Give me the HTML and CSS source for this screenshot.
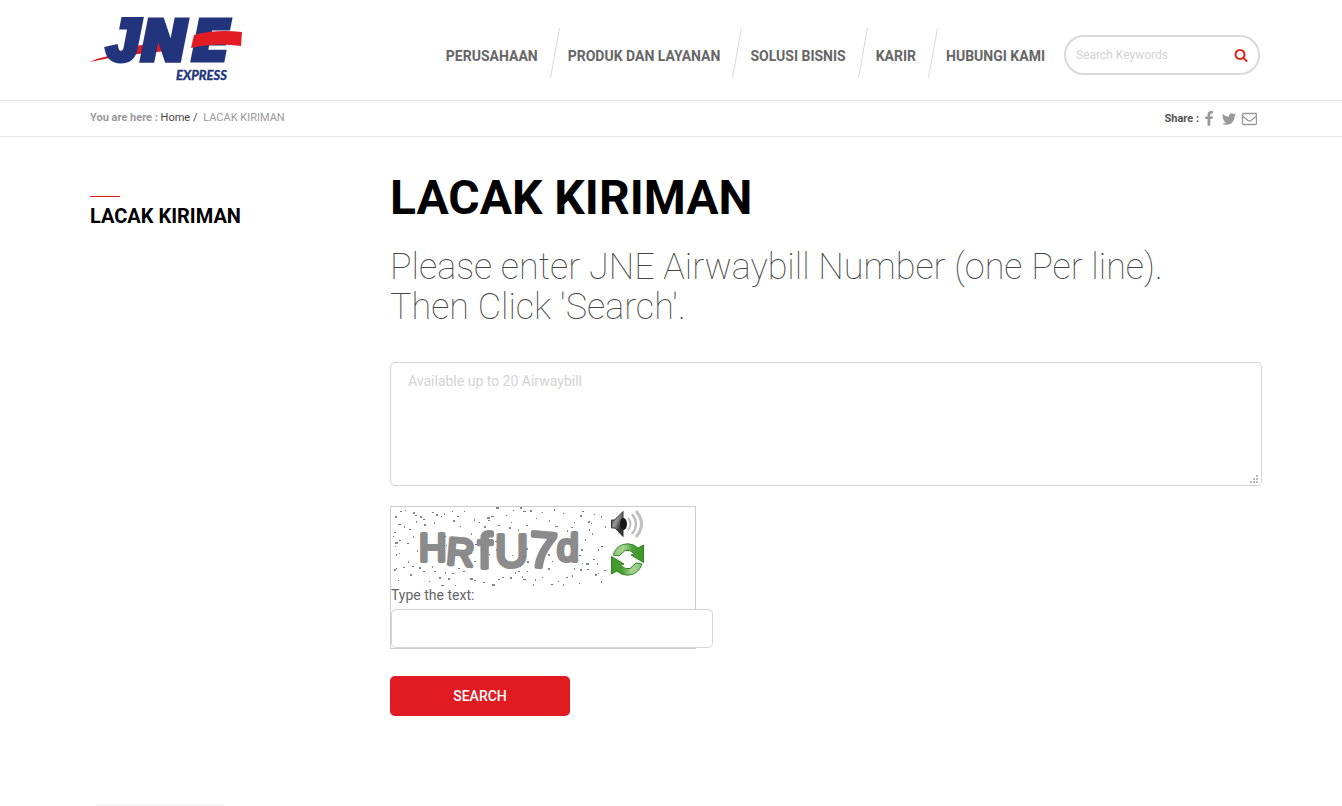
FILE: index.html
```
<!DOCTYPE html>
<html lang="id">
<head>
<meta charset="utf-8">
<meta name="viewport" content="width=device-width, initial-scale=1">
<title>JNE Express - Lacak Kiriman</title>
<link rel="stylesheet" href="styles.css">
</head>
<body>
<header class="header">
  <a class="logo" href="#" aria-label="JNE Express">
    <svg width="154" height="92" viewBox="0 -15 154 92">
      <path class="logo-red" d="M0 47Q8 43 18 41L40 32 76 26 76 36 30 41Q14 44 0 47z"/>
      <g class="logo-letters">
        <text class="logo-j" x="17" y="45">J</text>
        <text x="51" y="45">N</text>
        <text x="102" y="45">E</text>
      </g>
      <path class="logo-red" d="M104 20Q125 14 152 17L151 31Q125 27 101 33z"/>
      <text class="logo-sub" x="86" y="65">EXPRESS</text>
    </svg>
  </a>
  <nav class="nav">
    <a href="#">PERUSAHAAN</a>
    <svg class="slash" width="10" height="50" viewBox="0 0 10 50"><path d="M9.500 0L.5 50"/></svg>
    <a href="#">PRODUK DAN LAYANAN</a>
    <svg class="slash" width="10" height="50" viewBox="0 0 10 50"><path d="M9.500 0L.5 50"/></svg>
    <a href="#">SOLUSI BISNIS</a>
    <svg class="slash" width="10" height="50" viewBox="0 0 10 50"><path d="M9.500 0L.5 50"/></svg>
    <a href="#">KARIR</a>
    <svg class="slash" width="10" height="50" viewBox="0 0 10 50"><path d="M9.500 0L.5 50"/></svg>
    <a href="#">HUBUNGI KAMI</a>
  </nav>
  <form class="search">
    <input type="text" placeholder="Search Keywords" aria-label="Search Keywords">
    <button type="button" aria-label="Search">
      <svg width="14" height="14" viewBox="0 0 1792 1792"><path d="M1216 832q0-185-131.500-316.500t-316.500-131.500-316.500 131.500-131.500 316.500 131.500 316.500 316.500 131.500 316.500-131.500 131.500-316.500zm512 832q0 52-38 90t-90 38q-54 0-90-38l-343-342q-179 124-399 124-143 0-273.500-55.500t-225-150-150-225-55.500-273.500 55.500-273.500 150-225 225-150 273.500-55.500 273.500 55.500 225 150 150 225 55.500 273.500q0 220-124 399l343 343q37 37 37 90z"/></svg>
    </button>
  </form>
</header>

<div class="bar">
  <div class="crumbs"><b>You are here :</b> <a href="#">Home</a> <i>/</i> <span>LACAK KIRIMAN</span></div>
  <div class="share">
    <b>Share :</b>
    <a href="#" aria-label="Facebook"><svg width="16" height="16" viewBox="0 0 1792 1792"><path d="M1343 12v264h-157q-86 0-116 36t-30 108v189h293l-39 296h-254v759h-306v-759h-255v-296h255v-218q0-186 104-288.500t277-102.500q147 0 228 12z"/></svg></a>
    <a href="#" aria-label="Twitter"><svg width="16" height="16" viewBox="0 0 1792 1792"><path d="M1684 408q-67 98-162 167 1 14 1 42 0 130-38 259.500t-115.500 248.500-184.500 210.500-258 146-323 54.500q-271 0-496-145 35 4 78 4 225 0 401-138-105-2-188-64.500t-114-159.500q33 5 61 5 43 0 85-11-112-23-185.500-111.500t-73.500-205.500v-4q68 38 146 41-66-44-105-115t-39-154q0-88 44-163 121 149 294.500 238.500t371.500 99.500q-8-38-8-74 0-134 94.500-228.500t228.500-94.500q140 0 236 102 109-21 205-78-37 115-142 178 93-10 186-50z"/></svg></a>
    <a href="#" aria-label="Email"><svg class="mail" width="16" height="16" viewBox="0 0 16 16"><rect x="1.500" y="2.500" width="14" height="11" rx="1"/><path d="M1.500 5L7 9.500q1.500 1 3 0L15.500 5"/></svg></a>
  </div>
</div>

<div class="content">
  <aside class="side">
    <h2>LACAK KIRIMAN</h2>
  </aside>
  <main class="main">
    <h1>LACAK KIRIMAN</h1>
    <p class="lead">Please enter JNE Airwaybill Number (one Per line).<br>Then Click 'Search'.</p>
    <form>
      <div class="area">
        <textarea placeholder="Available up to 20 Airwaybill" aria-label="Airwaybill numbers"></textarea>
        <svg class="grip" width="8" height="8" viewBox="0 0 8 8"><path d="M6 0h2v2H6zM3 3h2v2H3zM6 3h2v2H6zM0 6h2v2H0zM3 6h2v2H3zM6 6h2v2H6z"/></svg>
      </div>
      <div class="captcha">
        <div class="captcha-row">
          <svg class="captcha-image" width="216" height="80" viewBox="0 0 216 80">
            <g class="captcha-code">
              <text x="28" y="54" font-size="38">H</text>
              <text x="56" y="58" font-size="38" transform="rotate(5 68 42)">R</text>
              <text x="87" y="61" font-size="50">f</text>
              <text x="104" y="60" font-size="46">U</text>
              <text x="138" y="60" font-size="50" transform="rotate(5 150 42)">7</text>
              <text x="166" y="54" font-size="39">d</text>
            </g>
            <path class="noise" d="M4 10h2M22 6h2M29 10h2M45 8h2M53 7h1M96 11h3M105 1h3M129 1h2M139 4h2M163 3h1M189 9h2M210 10h1M13 20h1M33 18h2M43 16h1M62 14h2M83 13h1M93 20h2M118 21h2M127 23h1M158 14h1M176 24h1M197 15h2M214 20h1M4 36h3M22 30h1M26 44h1M5 48h1M17 55h1M3 63h2M28 61h2M41 60h1M48 71h2M54 66h1M57 72h2M79 72h3M101 78h3M119 71h2M124 66h1M131 70h1M144 73h1M157 62h2M172 78h1M183 62h1M189 63h2M195 57h3M206 57h1M204 68h2M210 75h1M181 69h1M190 43h2M198 23h1M201 27h1M207 43h1M194 33h1M157 27h1M157 48h2M130 30h1M134 42h3M136 55h2M105 43h2M80 27h1M79 46h2M53 48h1M25 15h1M142 78h1M19 68h2"/>
            <path class="noise fine" d="M9 4.500h2M14 3.500h1M24 8.500h2M32 12.500h2M41 5.500h2M50 9.500h1M61 4.500h1M66 9.500h2M100 9.500h3M122 3.500h1M132 4.500h3M151 5.500h1M172 6.500h1M191 4.500h2M7 17.500h3M3 25.500h2M2 29.500h1M18 22.500h2M69 19.500h1M88 15.500h1M97 13.500h2M107 18.500h2M120 15.500h1M135 18.500h2M164 19.500h3M180 20.500h2M200 16.500h1M8 33.500h2M4 39.500h1M16 36.500h2M8 46.500h1M21 59.500h2M5 61.500h1M12 60.500h2M32 64.500h2M43 64.500h2M61 66.500h2M67 61.500h2M72 64.500h2M83 73.500h2M92 75.500h2M107 72.500h2M111 70.500h2M127 64.500h2M136 64.500h1M132 72.500h3M151 70.500h1M160 77.500h2M175 70.500h2M196 62.500h2M202 52.500h2M207 66.500h1M167 74.500h1M188 48.500h2M191 56.500h1M210 39.500h2M159 33.500h2M161 54.500h1M132 49.500h2M129 59.500h1M104 34.500h2M107 48.500h1M84 37.500h2M83 54.500h2M53 29.500h2M55 38.500h1M56 56.500h2M73 4.500h1M115 8.500h1M145 11.500h1M183 15.500h1M203 7.500h1M38 74.500h1M7 73.500h1M64 78.500h1M188 76.500h1M213 63.500h2M50 78.500h3"/>
            <path class="noise fine" d="M34 31l1-1M62 33l1-2M70 50l1-1M93 34l1-1M98 48l1-1M121 49l1-1M114 55l1-1M146 25l1-1M151 45l1-1M171 42l1-1M185 43l1-1"/>
          </svg>
          <div class="captcha-tools">
            <button type="button" aria-label="Play sound">
              <svg width="34" height="32" viewBox="0 0 34 32">
                <defs>
                  <linearGradient id="cone" x1="0" y1="0" x2="1" y2="1"><stop offset="0" stop-color="#222"/><stop offset=".4" stop-color="#999"/><stop offset=".7" stop-color="#333"/></linearGradient>
                  <linearGradient id="leaf" x1="0" y1="0" x2="1" y2="0"><stop offset="0" stop-color="#8cc47c"/><stop offset=".35" stop-color="#a5d395"/><stop offset=".65" stop-color="#4b9f34"/><stop offset="1" stop-color="#3f9626"/></linearGradient>
                </defs>
                <path fill="url(#cone)" stroke="#333" d="M.5 11h3L12 2.500v25L4 19H.5z"/>
                <ellipse cx="12.500" cy="15" rx="3.500" ry="6" fill="#171717"/>
                <g fill="none" stroke="#c0c0c0"><path stroke-width="2" d="M17 9q5 6 0 12"/><path stroke-width="2.400" d="M21 5q8 10 0 20"/><path stroke-width="3" d="M25 2q11 13 0 26"/></g>
              </svg>
            </button>
            <button type="button" aria-label="Refresh image">
              <svg width="34" height="34" viewBox="0 0 34 34">
                <g fill="url(#leaf)" stroke="#31851f" stroke-linejoin="round">
                  <path d="M2 12Q6 .8 17 .8Q23 1 27 5L32.500 2V19.500L20 12 23.500 10.500Q18 6 14 7.500L8 13z"/>
                  <path transform="rotate(180 16.500 16.500)" d="M2 12Q6 .8 17 .8Q23 1 27 5L32.500 2V19.500L20 12 23.500 10.500Q18 6 14 7.500L8 13z"/>
                </g>
              </svg>
            </button>
          </div>
        </div>
        <label for="code">Type the text:</label>
        <input id="code" type="text">
      </div>
      <button class="submit" type="button">SEARCH</button>
    </form>
  </main>
</div>
<footer class="footer"><div class="footer-edge"></div></footer>
</body>
</html>
```
FILE: styles.css
```
* { box-sizing: border-box; }
body { margin: 0; background: #fff; color: #666; font: 14px/20px Roboto, "Liberation Sans", sans-serif; }
a { color: inherit; text-decoration: none; }
svg { display: block; }
button { padding: 0; border: 0; background: none; font: inherit; cursor: pointer; }
input, textarea { font: inherit; color: #666; border: 1px solid #d6d6d6; border-radius: 5px; background: #fff; }
::placeholder { color: #d3d3d3; opacity: 1; }

.header { display: flex; align-items: flex-start; height: 101px; padding: 0 82px 0 90px; border-bottom: 1px solid #e7e7e7; }
.logo-red { fill: #e31c23; }
.logo-letters { font: italic bold 56px "DejaVu Sans", sans-serif; fill: #22357c; stroke: #22357c; stroke-width: 5px; }
.logo-j { font-family: "Liberation Sans", Arial, sans-serif; font-size: 58px; stroke-width: 6px; }
.logo-sub { font: italic bold 13px Lato, "Liberation Sans", sans-serif; fill: #22357c; stroke: #22357c; stroke-width: .4px; }
.nav { display: flex; align-items: flex-start; margin: 28px 0 0 auto; font-weight: 700; }
.nav a { padding-top: 18px; }
.slash { margin: 0 8px 0 12px; fill: none; stroke: #d8d8d8; }
.search { display: flex; align-items: center; width: 196px; height: 40px; margin: 35px 0 0 19px; padding: 0 10px; border: 2px solid #d9d9d9; border-radius: 20px; }
.search input { flex: 1; min-width: 0; padding: 0; border: 0; font-size: 12px; }
.search svg { fill: #e02a1d; }

.bar { display: flex; justify-content: space-between; height: 36px; padding: 7px 85px 0 90px; border-bottom: 1px solid #e7e7e7; font-size: 11px; color: #999; }
.crumbs a, .crumbs i { color: #444; font-style: normal; }
.crumbs i { margin-right: 3px; }
.share { display: flex; align-items: center; gap: 4px; height: 22px; color: #555; }
.share svg { fill: #999; }
.share b { margin-right: -2px; }
.share .mail { fill: none; stroke: #999; stroke-width: 1.3; }

.content { display: flex; padding: 35px 80px 0 90px; }
.side { flex: 0 0 300px; padding-top: 24px; }
.side::before { content: ""; display: block; width: 30px; height: 1px; background: #e11b22; }
.side h2 { margin: 6px 0 0; color: #000; font-size: 20px; line-height: 26px; }
.main { flex: 1; min-width: 0; }
.main h1 { margin: 0; color: #000; font-size: 48px; line-height: 52px; }
.lead { margin: 23px 0 35px; color: #444; font-size: 36px; font-weight: 100; line-height: 40px; }
.area { position: relative; }
.area textarea { display: block; width: 100%; height: 124px; padding: 8px 17px; resize: none; }
.grip { position: absolute; right: 4px; bottom: 3px; fill: #bbb; }
.captcha { width: 306px; margin: 20px 0 27px; border: 1px solid #ccc; }
.captcha-row { display: flex; gap: 4px; height: 78px; }
.captcha-image { flex: none; }
.captcha-code { font-family: "Liberation Sans", sans-serif; fill: #8b8b8b; stroke: #8b8b8b; stroke-width: 4px; stroke-linejoin: round; }
.noise { stroke: #888; stroke-width: 2; fill: none; }
.fine { stroke-width: 1; stroke: #777; }
.captcha-tools button { display: block; height: 35px; }
.captcha label { display: block; margin-bottom: 4px; }
.captcha input { display: block; width: 322px; height: 39px; padding: 8px 16px; }
.submit { width: 180px; height: 40px; border-radius: 5px; background: #e11b22; color: #fff; font-weight: 500; }
.footer { padding: 88px 96px 0; }
.footer-edge { width: 128px; height: 2px; background: #f4f4f4; }
```
